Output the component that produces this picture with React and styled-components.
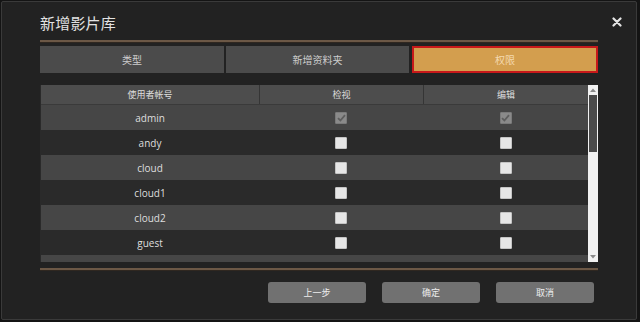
import React from "react";
import styled, { createGlobalStyle } from "styled-components";

const Global = createGlobalStyle`
  html, body { margin: 0; padding: 0; background: #141414; }
  body { width: 640px; height: 322px; overflow: hidden; font-family: "Open Sans", "Noto Sans CJK SC", sans-serif; }
`;

const Dialog = styled.div`
  box-sizing: border-box;
  margin: 1px 0 0 1px;
  width: 636px;
  height: 319px;
  background: #222222;
  border: 1px solid #3a3a3a;
  border-radius: 2px;
  padding: 0 38px 0 38px;
  display: flex;
  flex-direction: column;
`;

const TitleBar = styled.div`
  display: flex;
  align-items: center;
  justify-content: space-between;
  height: 38px;
  padding-top: 2px;
  box-sizing: border-box;
`;

const Title = styled.h1`
  margin: 0;
  font-family: "Noto Sans CJK SC", sans-serif;
  font-weight: 400;
  font-size: 15px;
  color: #e2e2e2;
  letter-spacing: 0.2px;
`;

const Close = styled.button`
  margin-right: -25px;
  background: none;
  border: 0;
  padding: 0;
  width: 12px;
  height: 12px;
  display: flex;
  align-items: center;
  justify-content: center;
`;

const Rule = styled.div`
  height: 3px;
  box-sizing: border-box;
  border-top: 2px solid #6c5846;
  border-bottom: 1px solid #2f2720;
`;

const Tabs = styled.div`
  display: grid;
  grid-template-columns: 184px 183px 1fr;
  gap: 2px;
  margin-top: 3px;
  height: 27px;
`;

const Tab = styled.div`
  box-sizing: border-box;
  display: flex;
  align-items: center;
  justify-content: center;
  font-family: "Noto Sans CJK SC", sans-serif;
  font-size: 10px;
  background: ${(p) => (p.$active ? "#d39e4e" : "#4b4b4b")};
  color: ${(p) => (p.$active ? "#f3d9b0" : "#cdcdcd")};
  border: ${(p) => (p.$active ? "2px solid #c8191a" : "none")};
  margin-left: ${(p) => (p.$active ? "1px" : "0")};
`;

const TableArea = styled.div`
  margin-top: 12px;
  height: 177px;
  display: flex;
`;

const Table = styled.div`
  flex: 1;
  overflow: hidden;
  background: #4a4a4a;
  border-left: 1px solid #2a2a2a;
`;

const Row = styled.div`
  display: grid;
  grid-template-columns: 218px 164px 1fr;
  height: ${(p) => (p.$head ? "19px" : "25px")};
  background: ${(p) => (p.$head ? "#4d4d4d" : p.$dark ? "#2a2a2a" : "#464646")};
  border-bottom: ${(p) => (p.$head ? "1px solid #3a3a3a" : "none")};
`;

const Cell = styled.div`
  display: flex;
  align-items: center;
  justify-content: center;
  color: #dedede;
  font-size: ${(p) => (p.$head ? "9px" : "10px")};
  font-family: ${(p) => (p.$head ? '"Noto Sans CJK SC", sans-serif' : '"Open Sans", sans-serif')};
  border-left: ${(p) => (p.$head && p.$sep ? "1px solid #353535" : "none")};
`;

const Box = styled.span`
  box-sizing: border-box;
  width: 12px;
  height: 12px;
  border-radius: 1px;
  background: ${(p) => (p.$checked ? "#8a8a8a" : "#e6e6e6")};
  border: 1px solid ${(p) => (p.$checked ? "#7a7a7a" : "#c4c4c4")};
  display: flex;
  align-items: center;
  justify-content: center;
`;

const Scroll = styled.div`
  width: 10px;
  background: #f1f1f1;
  display: flex;
  flex-direction: column;
`;

const Arrow = styled.div`
  height: 10px;
  display: flex;
  align-items: center;
  justify-content: center;
`;

const Thumb = styled.div`
  height: 57px;
  background: #4a4a4a;
  margin: 0 1px;
`;

const Track = styled.div`
  flex: 1;
`;

const Footer = styled.div`
  margin-top: 6px;
`;

const Buttons = styled.div`
  display: flex;
  gap: 16px;
  margin-top: 11px;
  padding-left: 228px;
`;

const Button = styled.button`
  width: 98px;
  height: 21px;
  border: 0;
  border-radius: 3px;
  background: #717171;
  color: #eeeeee;
  font-family: "Noto Sans CJK SC", sans-serif;
  font-size: 9px;
  padding: 0;
`;

const users = [
  { name: "admin", checked: true },
  { name: "andy" },
  { name: "cloud" },
  { name: "cloud1" },
  { name: "cloud2" },
  { name: "guest" },
  { name: "" },
];

function Check({ checked }) {
  return (
    <Box $checked={checked}>
      {checked && (
        <svg width="9" height="8" viewBox="0 0 9 8">
          <path d="M1 4.2 L3.4 6.5 L8 1.2" fill="none" stroke="#5e5e5e" strokeWidth="1.8" />
        </svg>
      )}
    </Box>
  );
}

export default function App() {
  return (
    <>
      <Global />
      <Dialog>
        <TitleBar>
          <Title>新增影片库</Title>
          <Close aria-label="close">
            <svg width="10" height="10" viewBox="0 0 10 10">
              <path d="M1.5 1.5 L8.5 8.5 M8.5 1.5 L1.5 8.5" stroke="#e4e4e4" strokeWidth="2.2" strokeLinecap="round" />
            </svg>
          </Close>
        </TitleBar>
        <Rule />
        <Tabs>
          <Tab>类型</Tab>
          <Tab>新增资料夹</Tab>
          <Tab $active>权限</Tab>
        </Tabs>
        <TableArea>
          <Table>
            <Row $head>
              <Cell $head>使用者帐号</Cell>
              <Cell $head $sep>检视</Cell>
              <Cell $head $sep>编辑</Cell>
            </Row>
            {users.map((u, i) => (
              <Row key={i} $dark={i % 2 === 1}>
                <Cell>{u.name}</Cell>
                <Cell>{u.name && <Check checked={u.checked} />}</Cell>
                <Cell>{u.name && <Check checked={u.checked} />}</Cell>
              </Row>
            ))}
          </Table>
          <Scroll>
            <Arrow>
              <svg width="6" height="4" viewBox="0 0 6 4"><path d="M0 4 L3 0.5 L6 4 Z" fill="#8a8a8a" /></svg>
            </Arrow>
            <Thumb />
            <Track />
            <Arrow>
              <svg width="6" height="4" viewBox="0 0 6 4"><path d="M0 0 L3 3.5 L6 0 Z" fill="#8a8a8a" /></svg>
            </Arrow>
          </Scroll>
        </TableArea>
        <Footer>
          <Rule />
          <Buttons>
            <Button>上一步</Button>
            <Button>确定</Button>
            <Button>取消</Button>
          </Buttons>
        </Footer>
      </Dialog>
    </>
  );
}
